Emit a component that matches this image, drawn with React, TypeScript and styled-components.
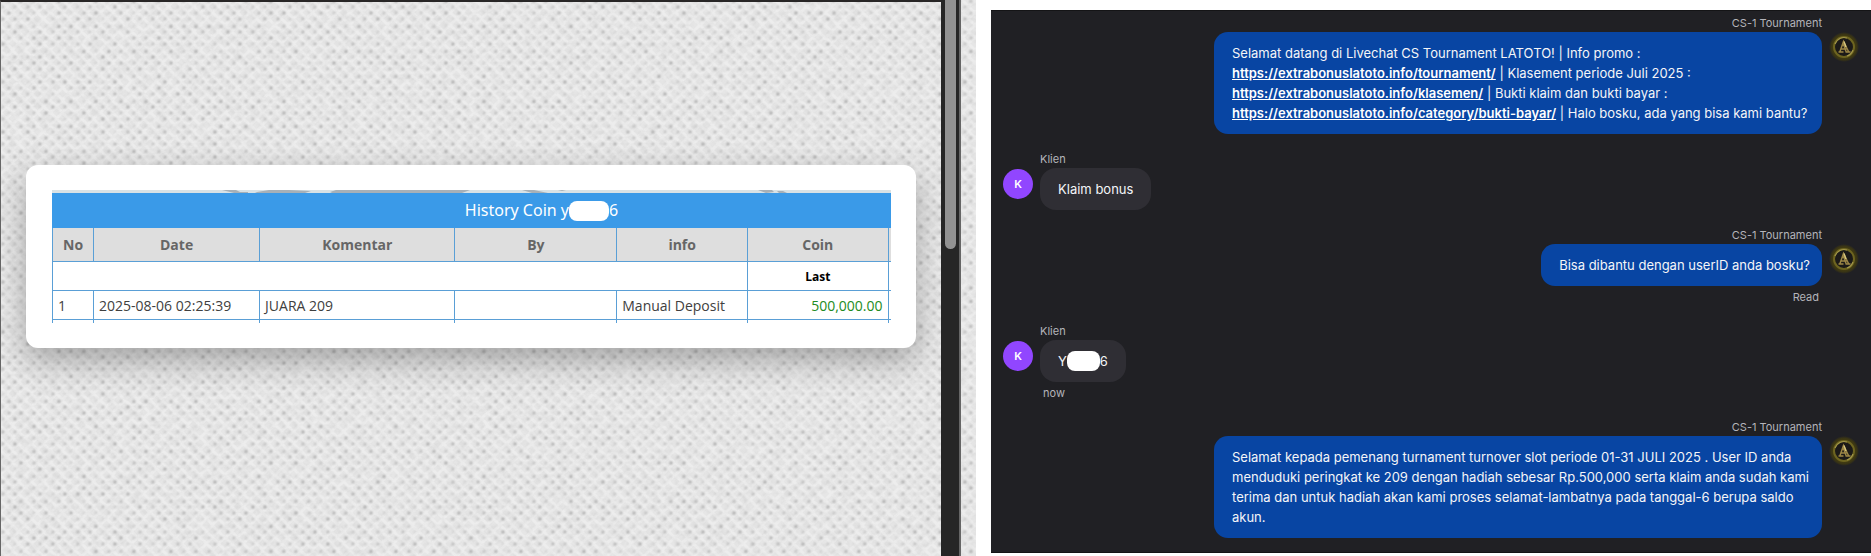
import React from "react";
import styled, { createGlobalStyle } from "styled-components";

const GlobalStyle = createGlobalStyle`
  * { box-sizing: border-box; }
  body { margin: 0; background: #fff; }
`;

const Page = styled.main`
  display: grid;
  grid-template-columns: 976fr 895fr;
  min-height: 100vh;
`;

const HistoryPane = styled.section`
  position: relative;
  isolation: isolate;
  display: flex;
  align-items: stretch;
  background: #e4e4e4;
`;

const Texture = styled.svg`
  position: absolute;
  inset: 0;
  z-index: -1;
  width: 100%;
  height: 100%;
`;

const Viewport = styled.div`
  flex: 1;
  min-width: 0;
  border-top: 2px solid #282626;
  border-left: 1px solid #666;
  padding: 163px 25px 40px;
`;

const Card = styled.div`
  padding: 25px 25px 25px 26px;
  border-radius: 12px;
  background: #fff;
  box-shadow: 0 12px 32px rgba(0, 0, 0, 0.3);
`;

const Banner = styled.svg`
  display: block;
  width: 100%;
  height: 3px;
`;

const CoinTable = styled.table`
  width: 100%;
  table-layout: fixed;
  border-collapse: collapse;
  font-family: "Open Sans", "Noto Sans", sans-serif;
  font-size: 14px;
  line-height: 20px;
  color: #404040;
`;

const Title = styled.caption`
  height: 35px;
  background: #3a9ae8;
  color: #fff;
  font-family: "Noto Sans", sans-serif;
  font-size: 16px;
  line-height: 35px;
  padding-left: 140px;
`;

const TitleText = styled.span`
  display: flex;
  align-items: center;
  justify-content: center;
`;

const Col = styled.col<{ $share: number }>`
  width: ${(p) => p.$share}%;
`;

const EdgeCol = styled.col`
  width: 3px;
`;

const HeadCell = styled.th`
  height: 33px;
  padding: 2px 0 0;
  border: 1px solid #5a9fd6;
  border-top: 0;
  background: #dedede;
  color: #666;
  font-weight: 700;
`;

const Cell = styled.td<{ $align?: string }>`
  height: 29px;
  padding: 2px 5px 0;
  border: 1px solid #5a9fd6;
  text-align: ${(p) => p.$align ?? "left"};
  white-space: nowrap;
`;

const LastCell = styled(Cell)`
  color: #000;
  font-size: 12px;
  font-weight: 700;
`;

const AmountCell = styled(Cell)`
  color: #228b22;
`;

const EdgeCell = styled.td<{ $shaded?: boolean }>`
  padding: 0;
  border: solid #5a9fd6;
  border-width: 0 0 1px 1px;
  background: ${(p) => (p.$shaded ? "#dedede" : "#fff")};
`;

const TailCell = styled.td`
  height: 4px;
  padding: 0;
  border-left: 1px solid #5a9fd6;
`;

const Redaction = styled.span<{ $width: number }>`
  display: inline-block;
  flex: none;
  width: ${(p) => p.$width}px;
  height: 20px;
  border-radius: 8px;
  background: #fff;
`;

const ScrollTrack = styled.div`
  width: 20px;
  padding: 0 3px 0 4px;
  border-right: 2px solid #666;
  background: #262626;
`;

const ScrollThumb = styled.div`
  height: 249px;
  border-radius: 0 0 6px 6px;
  background: #929292;
`;

const Gutter = styled.div`
  width: 15px;
`;

const ChatPane = styled.section`
  display: flex;
  padding: 10px 0 3px 15px;
  background: #fff;
`;

const Thread = styled.ol`
  flex: 1;
  display: flex;
  flex-direction: column;
  gap: 17px;
  margin: 0;
  padding: 4px 12px 14px;
  list-style: none;
  background: #202024;
  border-top: 1px solid #141416;
  border-bottom: 1px solid #141416;
  font-family: Inter, sans-serif;
`;

const Message = styled.li<{ $own: boolean }>`
  display: flex;
  flex-direction: ${(p) => (p.$own ? "row-reverse" : "row")};
  align-items: flex-start;
  gap: 7px;
`;

const Body = styled.div<{ $own: boolean }>`
  display: flex;
  flex-direction: column;
  align-items: ${(p) => (p.$own ? "flex-end" : "flex-start")};
`;

const Sender = styled.span`
  height: 17px;
  color: #b4b4ba;
  font-size: 11px;
  line-height: 16px;
`;

const Status = styled.span`
  height: 20px;
  padding: 3px 3px 0;
  color: #b4b4ba;
  font-size: 11px;
  line-height: 16px;
`;

const Bubble = styled.p<{ $own: boolean; $wide?: boolean }>`
  display: ${(p) => (p.$own ? "block" : "flex")};
  align-items: center;
  margin: 0;
  width: ${(p) => (p.$wide ? "608px" : "auto")};
  min-height: 42px;
  padding: 11px ${(p) => (p.$wide ? 10 : p.$own ? 12 : 18)}px 11px 18px;
  border-radius: ${(p) => (p.$own ? 14 : 16)}px;
  background: ${(p) => (p.$own ? "#0845a3" : "#2f2e34")};
  color: #f4f5f8;
  font-size: 13px;
  line-height: 20px;
`;

const ChatLink = styled.a`
  color: #fff;
  font-weight: 600;
  text-decoration: underline;
`;

const ClientAvatar = styled.span`
  flex: none;
  width: 30px;
  height: 30px;
  margin-top: 18px;
  border-radius: 50%;
  background: #9146ff;
  color: #fff;
  font-size: 11px;
  font-weight: 600;
  line-height: 30px;
  text-align: center;
`;

const AgentAvatar = styled.svg`
  flex: none;
  width: 30px;
  height: 30px;
  margin-top: 17px;
`;

const AgentLogo = () => (
  <AgentAvatar viewBox="0 0 30 30" aria-label="Latoto">
    <defs>
      <radialGradient id="halo">
        <stop offset="0.6" stopColor="#4a4310" />
        <stop offset="0.85" stopColor="#3a3514" />
        <stop offset="1" stopColor="#202024" />
      </radialGradient>
    </defs>
    <circle cx="15" cy="15" r="15" fill="url(#halo)" />
    <circle cx="15" cy="15" r="10" fill="#1c1a18" stroke="#6d6420" strokeWidth="2" />
    <path d="M6 12a9.500 9.500 0 0 1 12-6M24 18a9.500 9.500 0 0 1-6 6" fill="none" stroke="#a0954a" strokeWidth="1.2" />
    <path d="M9.500 20h5M16.500 20h5M11 19.500l3.500-10 5 10M14 10.500l3 9M12 17h5.500" fill="none" stroke="#9c8646" strokeWidth="1.5" />
    <path d="M15 9.500l2 5.500" stroke="#d8c880" strokeWidth="1.3" />
  </AgentAvatar>
);

type Entry = {
  own: boolean;
  wide?: boolean;
  text: React.ReactNode;
  status?: string;
};

const entries: Entry[] = [
  {
    own: true,
    wide: true,
    text: (
      <>
        Selamat datang di Livechat CS Tournament LATOTO! | Info promo :<br />
        <ChatLink href="https://extrabonuslatoto.info/tournament/">https://extrabonuslatoto.info/tournament/</ChatLink>
        {" | Klasement periode Juli 2025 :"}
        <br />
        <ChatLink href="https://extrabonuslatoto.info/klasemen/">https://extrabonuslatoto.info/klasemen/</ChatLink>
        {" | Bukti klaim dan bukti bayar :"}
        <br />
        <ChatLink href="https://extrabonuslatoto.info/category/bukti-bayar/">
          https://extrabonuslatoto.info/category/bukti-bayar/
        </ChatLink>
        {" | Halo bosku, ada yang bisa kami bantu?"}
      </>
    ),
  },
  { own: false, text: "Klaim bonus" },
  { own: true, text: "Bisa dibantu dengan userID anda bosku?", status: "Read" },
  {
    own: false,
    text: (
      <>
        Y<Redaction $width={33} />6
      </>
    ),
    status: "now",
  },
  {
    own: true,
    wide: true,
    text: "Selamat kepada pemenang turnament turnover slot periode 01-31 JULI 2025 . User ID anda menduduki peringkat ke 209 dengan hadiah sebesar Rp.500,000 serta klaim anda sudah kami terima dan untuk hadiah akan kami proses selamat-lambatnya pada tanggal-6 berupa saldo akun.",
  },
];

const Fabric = () => (
  <Texture aria-hidden="true">
    <defs>
      <pattern id="threads" width="25" height="25" patternUnits="userSpaceOnUse">
        <path
          d="M-2 15L15 -2M-2 27L27 -2M10 27L27 10M-2 10L15 27M-2 -2L27 27M10 -2L27 15"
          stroke="#f6f6f6"
          strokeWidth="3"
          opacity="0.4"
        />
      </pattern>
      <pattern id="dots" width="25" height="25" patternUnits="userSpaceOnUse">
        <g fill="#999">
          <circle cx="3" cy="7" r="1.5" />
          <circle cx="15" cy="7" r="1.5" />
          <circle cx="9" cy="13" r="1.5" />
          <circle cx="21" cy="13" r="1.5" />
          <circle cx="3" cy="19" r="1.5" />
          <circle cx="15" cy="19" r="1.5" />
          <circle cx="9" cy="1.500" r="1.5" />
          <circle cx="21" cy="1.500" r="1.5" />
        </g>
      </pattern>
      <filter id="grain" x="0" y="0" width="100%" height="100%">
        <feTurbulence type="fractalNoise" baseFrequency="0.12 0.16" numOctaves="3" seed="4" />
        <feColorMatrix values="0 0 0 0 0.5  0 0 0 0 0.5  0 0 0 0 0.5  1.4 0 0 0 -0.55" />
      </filter>
      <filter id="uneven" x="0" y="0" width="100%" height="100%">
        <feTurbulence type="fractalNoise" baseFrequency="0.09" numOctaves="2" seed="9" result="noise" />
        <feColorMatrix in="noise" values="0 0 0 0 0  0 0 0 0 0  0 0 0 0 0  2.4 0 0 0 -0.6" result="mask" />
        <feComposite in="SourceGraphic" in2="mask" operator="in" result="picked" />
        <feGaussianBlur in="picked" stdDeviation="0.9" />
      </filter>
    </defs>
    <rect width="100%" height="100%" fill="#e6e6e6" />
    <rect width="100%" height="100%" fill="url(#threads)" />
    <rect width="100%" height="100%" fill="url(#dots)" filter="url(#uneven)" />
    <rect width="100%" height="100%" filter="url(#grain)" opacity="0.35" />
  </Texture>
);

export default function App() {
  return (
    <>
      <GlobalStyle />
      <Page>
        <HistoryPane aria-label="History Coin">
          <Fabric />
          <Viewport>
            <Card>
              <Banner viewBox="0 0 839 3" preserveAspectRatio="none" aria-hidden="true">
                <rect width="839" height="3" fill="#d9e2e5" />
                <path
                  d="M170 0h14l4 2h8v1h-14zM205 2l12-2h20l22 1-6 2h-50zM278 2l6-2h134l-8 3H280zM470 0h12l14 3h-16zM506 0h8l-4 1zM706 0h14l2 2-8 1zM725 1h6l4 2h-8z"
                  fill="#a7b0b7"
                />
              </Banner>
              <CoinTable>
                <Title>
                  <TitleText>
                    History Coin y
                    <Redaction $width={40} />6
                  </TitleText>
                </Title>
                <colgroup>
                  <Col $share={4.9} />
                  <Col $share={19.8} />
                  <Col $share={23.3} />
                  <Col $share={19.3} />
                  <Col $share={15.6} />
                  <col />
                  <EdgeCol />
                </colgroup>
                <thead>
                  <tr>
                    <HeadCell>No</HeadCell>
                    <HeadCell>Date</HeadCell>
                    <HeadCell>Komentar</HeadCell>
                    <HeadCell>By</HeadCell>
                    <HeadCell>info</HeadCell>
                    <HeadCell>Coin</HeadCell>
                    <EdgeCell $shaded />
                  </tr>
                </thead>
                <tbody>
                  <tr>
                    <Cell colSpan={5} />
                    <LastCell $align="center">Last</LastCell>
                    <EdgeCell />
                  </tr>
                  <tr>
                    <Cell>1</Cell>
                    <Cell>2025-08-06 02:25:39</Cell>
                    <Cell>JUARA 209</Cell>
                    <Cell />
                    <Cell>Manual Deposit</Cell>
                    <AmountCell $align="right">500,000.00</AmountCell>
                    <EdgeCell />
                  </tr>
                  <tr aria-hidden="true">
                    <TailCell />
                    <TailCell />
                    <TailCell />
                    <TailCell />
                    <TailCell />
                    <TailCell />
                    <TailCell />
                  </tr>
                </tbody>
              </CoinTable>
            </Card>
          </Viewport>
          <ScrollTrack>
            <ScrollThumb />
          </ScrollTrack>
          <Gutter />
        </HistoryPane>
        <ChatPane aria-label="Livechat">
          <Thread>
            {entries.map((entry, i) => (
              <Message key={i} $own={entry.own}>
                {entry.own ? <AgentLogo /> : <ClientAvatar>K</ClientAvatar>}
                <Body $own={entry.own}>
                  <Sender>{entry.own ? "CS-1 Tournament" : "Klien"}</Sender>
                  <Bubble $own={entry.own} $wide={entry.wide}>
                    {entry.text}
                  </Bubble>
                  {entry.status && <Status>{entry.status}</Status>}
                </Body>
              </Message>
            ))}
          </Thread>
        </ChatPane>
      </Page>
    </>
  );
}
